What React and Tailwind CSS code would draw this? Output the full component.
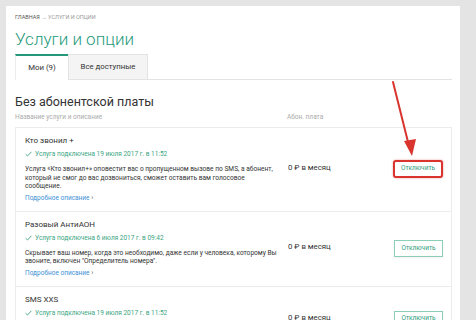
import React from 'react';

const services = [
  {
    id: 1,
    name: 'Кто звонил +',
    connected: 'Услуга подключена 19 июля 2017 г. в 11:52',
    description: [
      'Услуга «Кто звонил+» оповестит вас о пропущенном вызове по SMS, а абонент,',
      'который не смог до вас дозвониться, сможет оставить вам голосовое',
      'сообщение.',
    ],
    price: '0 ₽ в месяц',
    highlighted: true,
  },
  {
    id: 2,
    name: 'Разовый АнтиАОН',
    connected: 'Услуга подключена 6 июля 2017 г. в 09:42',
    description: [
      'Скрывает ваш номер, когда это необходимо, даже если у человека, которому Вы',
      'звоните, включен "Определитель номера".',
    ],
    price: '0 ₽ в месяц',
  },
  {
    id: 3,
    name: 'SMS XXS',
    connected: 'Услуга подключена 19 июля 2017 г. в 11:52',
    description: ['Пакет SMS для отправки сообщений на номера всех операторов.'],
    price: '0 ₽ в месяц',
  },
];

const Check = () => (
  <svg width="7" height="6" viewBox="0 0 7 6" className="shrink-0">
    <path d="M0.6 3.2 L2.5 5 L6.4 0.8" fill="none" stroke="#3aa57f" strokeWidth="0.9" />
  </svg>
);

const ServiceRow = ({ service }) => (
  <div className="flex items-center border-b border-[#ececec] pl-[9px] pr-[8px]">
    <div className="w-[263px] shrink-0 pt-[7px] pb-[8px]">
      <p className="text-[8px] leading-[12px] text-[#333]">{service.name}</p>
      <div className="mt-[2px] flex items-center gap-[3px] text-[6.5px] leading-[10px] text-[#3aa57f]">
        <Check />
        <span>{service.connected}</span>
      </div>
      <p className="mt-[6px] text-[6.6px] leading-[8.5px] text-[#333] whitespace-nowrap">
        {service.description.map((line, i) => (
          <React.Fragment key={i}>
            {line}
            {i < service.description.length - 1 && <br />}
          </React.Fragment>
        ))}
      </p>
      <p className="mt-[2px] text-[6.5px] leading-[10px] text-[#3d8fd6]">
        Подробное описание <span className="text-[#555]">›</span>
      </p>
    </div>
    <div className="flex-1 text-[7.8px] text-[#333] -mt-[3px]">{service.price}</div>
    <button
      className={
        service.highlighted
          ? 'w-[50px] h-[18px] rounded-[3px] border-2 border-[#d9342e] bg-white text-[6.5px] text-[#2d9c7a] shadow-[0_0_2px_rgba(200,40,40,0.5)]'
          : 'w-[49px] h-[17px] border border-[#8ccdb5] bg-white text-[6.5px] text-[#2d9c7a] shadow-[0_1px_2px_rgba(0,0,0,0.06)]'
      }
    >
      Отключить
    </button>
  </div>
);

export default function App() {
  return (
    <div
      className="relative h-[320px] w-[476px] overflow-hidden bg-[#e4e4e4] pl-[6px] pt-[6px]"
      style={{ fontFamily: 'Roboto, "Noto Sans", sans-serif' }}
    >
      <div className="h-[320px] w-[454px] bg-white pl-[9px] pr-[8px] pt-[7px]">
        {/* Breadcrumb */}
        <p className="text-[5.5px] leading-[8px] uppercase text-[#999]">
          <span className="text-[#555]">Главная</span> → Услуги и опции
        </p>

        {/* Title */}
        <h1 className="mt-[7px] text-[17px] leading-[22px] font-light text-[#23997a]">
          Услуги и опции
        </h1>

        {/* Tabs */}
        <div className="mt-[4px] flex h-[26px] border-b border-[#e3e3e3]">
          <div className="-mb-px flex w-[53px] items-center justify-center border-t-2 border-l border-[#23997a] border-l-[#ececec] bg-white text-[7.8px] text-[#333]">
            Мои (9)
          </div>
          <div className="flex w-[80px] items-center justify-center border border-b-0 border-[#e3e3e3] bg-[#f4f4f4] text-[7.8px] text-[#333]">
            Все доступные
          </div>
        </div>

        {/* Section heading */}
        <h2 className="mt-[13px] text-[12.5px] leading-[18px] text-[#333]">Без абонентской платы</h2>

        {/* Column labels */}
        <div className="mt-[1px] flex text-[6.5px] leading-[10px] text-[#aaa]">
          <span className="w-[272px]">Название услуги и описание</span>
          <span>Абон. плата</span>
        </div>

        {/* Services list */}
        <div className="mt-[5px] border-t border-x border-[#ececec]">
          {services.map((service) => (
            <ServiceRow key={service.id} service={service} />
          ))}
        </div>
      </div>

      {/* Annotation arrow */}
      <svg className="pointer-events-none absolute left-0 top-0" width="476" height="320">
        <line x1="393" y1="82" x2="409" y2="146" stroke="#d9342e" strokeWidth="2" strokeLinecap="round" />
        <polygon points="404,141 416,139 412,156" fill="#d9342e" />
      </svg>
    </div>
  );
}
